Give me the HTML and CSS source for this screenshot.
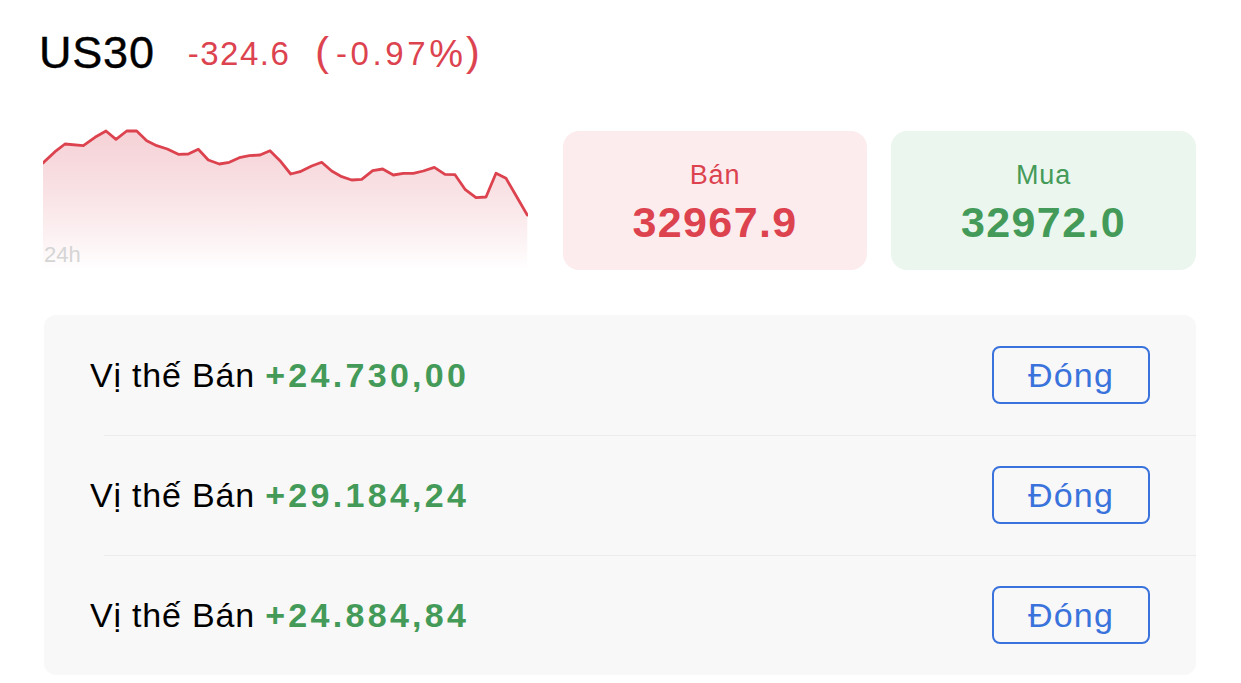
FILE: index.html
```html
<!DOCTYPE html>
<html lang="vi">
<head>
<meta charset="utf-8">
<title>US30</title>
<link rel="stylesheet" href="styles.css">
</head>
<body>
<div class="page">
  <header class="header">
    <h1 class="symbol">US30</h1>
    <span class="change">-324.6</span>
    <span class="pct"><span class="paren">(</span>-0.97<span class="pct-sign">%</span><span class="paren">)</span></span>
  </header>

  <section class="top">
    <div class="chart">
      <svg class="chart-svg" width="485" height="150" viewBox="0 0 485 150">
        <defs>
          <linearGradient id="fillGrad" x1="0" y1="0" x2="0" y2="1">
            <stop offset="0" stop-color="#f2c3c9" stop-opacity="0.75"/>
            <stop offset="1" stop-color="#ffffff" stop-opacity="1"/>
          </linearGradient>
        </defs>
        <path class="area" d="M0,43 L12,31.7 L22,24 L40.3,25.7 L52,17.3 L63,11 L73,19.3 L83.7,11 L93.7,11 L103.7,20.7 L113.7,25.7 L124.3,29 L135.3,34.3 L145.3,34 L155.3,29.3 L165.3,40 L176.3,44 L186.3,42.3 L196.3,37.7 L206.3,35.7 L217,35 L227,30.7 L237,40.7 L247.7,54 L257,51.7 L268.7,46 L278.7,42.3 L288.7,51 L298.7,56.7 L308.7,60 L318.7,59.3 L329.7,50.7 L339.7,49 L350.3,55 L360.3,53.3 L370.3,53.3 L380.3,51 L391.3,47.3 L402,54.3 L412,54.7 L422,69.3 L433,77.7 L443,77 L453,53.3 L463,58.3 L473.7,76.7 L484.3,95 L484.3,150 L0,150 Z" fill="url(#fillGrad)"/>
        <path class="line" d="M0,43 L12,31.7 L22,24 L40.3,25.7 L52,17.3 L63,11 L73,19.3 L83.7,11 L93.7,11 L103.7,20.7 L113.7,25.7 L124.3,29 L135.3,34.3 L145.3,34 L155.3,29.3 L165.3,40 L176.3,44 L186.3,42.3 L196.3,37.7 L206.3,35.7 L217,35 L227,30.7 L237,40.7 L247.7,54 L257,51.7 L268.7,46 L278.7,42.3 L288.7,51 L298.7,56.7 L308.7,60 L318.7,59.3 L329.7,50.7 L339.7,49 L350.3,55 L360.3,53.3 L370.3,53.3 L380.3,51 L391.3,47.3 L402,54.3 L412,54.7 L422,69.3 L433,77.7 L443,77 L453,53.3 L463,58.3 L473.7,76.7 L484.3,95" fill="none" stroke="#dc434f" stroke-width="2.8" stroke-linejoin="round" stroke-linecap="round"/>
      </svg>
      <span class="period">24h</span>
    </div>
    <div class="quote quote-sell">
      <span class="quote-label">Bán</span>
      <span class="quote-price">32967.9</span>
    </div>
    <div class="quote quote-buy">
      <span class="quote-label">Mua</span>
      <span class="quote-price">32972.0</span>
    </div>
  </section>

  <section class="positions">
    <div class="position">
      <span class="pos-text">Vị thế Bán <strong class="pos-pnl">+24.730,00</strong></span>
      <button class="close-btn">Đóng</button>
    </div>
    <div class="position">
      <span class="pos-text">Vị thế Bán <strong class="pos-pnl">+29.184,24</strong></span>
      <button class="close-btn">Đóng</button>
    </div>
    <div class="position">
      <span class="pos-text">Vị thế Bán <strong class="pos-pnl">+24.884,84</strong></span>
      <button class="close-btn">Đóng</button>
    </div>
  </section>
</div>
</body>
</html>
```

FILE: styles.css
```css
* { box-sizing: border-box; }

html, body {
  margin: 0;
  padding: 0;
  background: #ffffff;
  font-family: "Liberation Sans", Arial, sans-serif;
  color: #000;
}

.page {
  width: 1241px;
  height: 683px;
  overflow: hidden;
  padding: 0 45px 0 43px;
}

.header {
  height: 105px;
  display: flex;
  align-items: center;
  margin-left: -4px;
}

.symbol {
  margin: 0 33px 0 0;
  font-size: 45px;
  font-weight: 400;
  letter-spacing: 0.8px;
  line-height: 1;
  -webkit-text-stroke: 0.4px #000;
}

.change {
  color: #dc434f;
  font-size: 33px;
  line-height: 1;
  letter-spacing: 1.5px;
  padding-top: 2px;
  margin-right: 25px;
}

.pct {
  display: flex;
  align-items: center;
  color: #dc434f;
  font-size: 33px;
  line-height: 1;
  letter-spacing: 3.6px;
  padding-top: 2px;
}

.paren {
  font-size: 41px;
  letter-spacing: 0;
  padding-bottom: 3px;
  -webkit-text-stroke: 0.15px #dc434f;
}

.paren:first-child { margin-right: 7px; }
.paren:last-child { margin-left: 3px; }

.pct-sign {
  display: inline-block;
  font-size: 38px;
  letter-spacing: 0;
  padding-top: 1px;
}

.top {
  display: flex;
  align-items: flex-start;
  height: 210px;
  padding-top: 15px;
}

.chart {
  position: relative;
  width: 485px;
  height: 150px;
  margin-right: 35px;
}

.chart-svg {
  display: block;
}

.period {
  position: absolute;
  left: 1px;
  bottom: 4px;
  font-size: 22px;
  color: #d5d5d5;
  line-height: 1;
}

.quote {
  width: 304px;
  height: 139px;
  margin-top: 11px;
  border-radius: 16px;
  display: flex;
  flex-direction: column;
  align-items: center;
  justify-content: center;
  gap: 12px;
  padding-top: 4px;
}

.quote-sell {
  background: #fcecee;
  color: #dc434f;
  margin-right: 24px;
}

.quote-buy {
  background: #ebf6ef;
  color: #449b59;
  width: 305px;
}

.quote-label {
  font-size: 27px;
  line-height: 1;
  letter-spacing: 0.9px;
}

.quote-price {
  font-size: 43px;
  font-weight: 700;
  line-height: 1;
  letter-spacing: 1.4px;
}

.positions {
  margin-left: 1px;
  background: #f8f8f8;
  border-radius: 12px;
  height: 360px;
  overflow: hidden;
}

.position {
  height: 120px;
  display: flex;
  align-items: center;
  justify-content: space-between;
  padding: 0 46px 0 46px;
  position: relative;
}

.position + .position::before {
  content: "";
  position: absolute;
  top: 0;
  left: 60px;
  right: 0;
  height: 1px;
  background: #ececec;
}

.pos-text {
  font-size: 34px;
  letter-spacing: 0.8px;
  line-height: 1;
}

.pos-pnl {
  color: #449b59;
  font-weight: 700;
  letter-spacing: 3.3px;
}

.close-btn {
  width: 158px;
  height: 58px;
  border: 2px solid #3b73dc;
  border-radius: 8px;
  background: transparent;
  color: #3b73dc;
  font-family: "Liberation Sans", Arial, sans-serif;
  font-size: 34px;
  letter-spacing: 1.2px;
  padding: 0;
  line-height: 1;
}
```
